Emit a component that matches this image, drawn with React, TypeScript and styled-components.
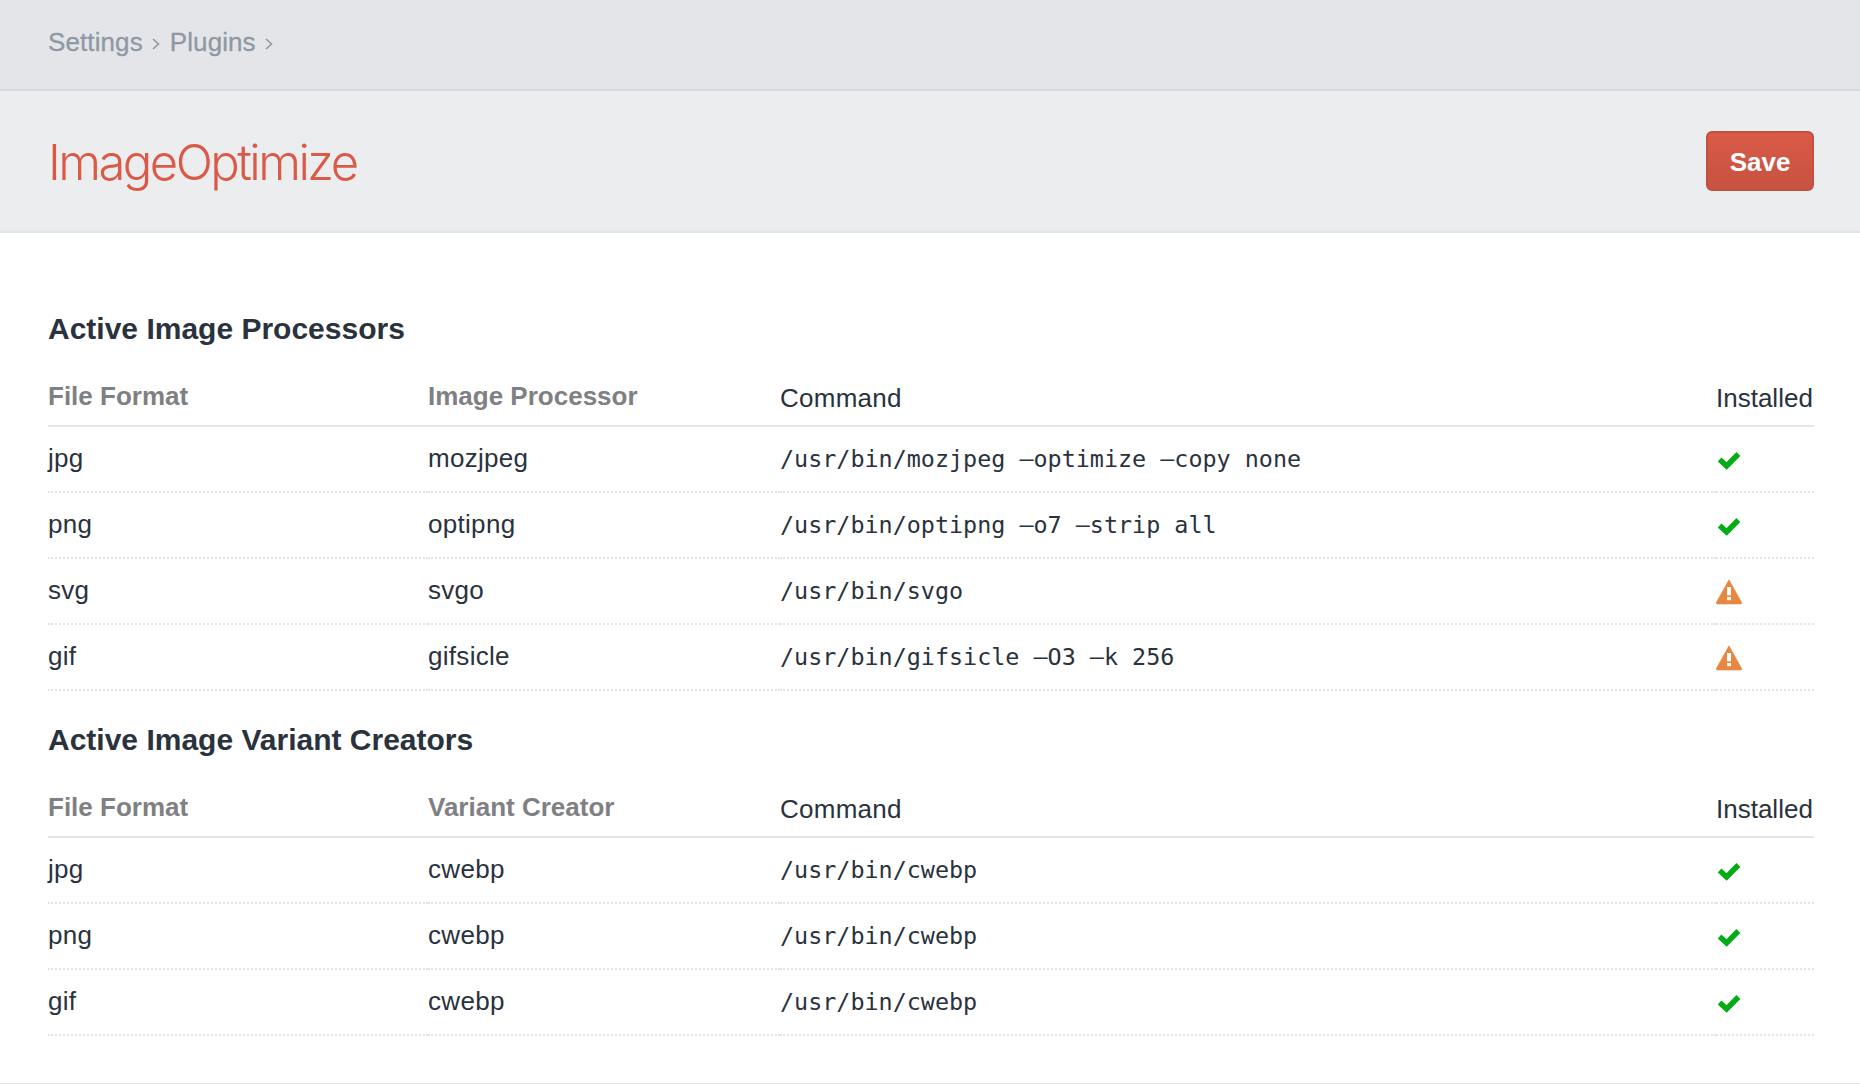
import styled, { createGlobalStyle } from "styled-components";

const GlobalStyle = createGlobalStyle`
  html, body {
    margin: 0;
    padding: 0;
    background: #fff;
  }
  body {
    font-family: "Liberation Sans", Arial, sans-serif;
    font-size: 26px;
    color: #29323d;
    overflow: hidden;
  }
`;

const Page = styled.div`
  height: 1084px;
  box-sizing: border-box;
  border-bottom: 1px solid #e3e5e8;
`;

const CrumbBar = styled.nav`
  height: 91px;
  box-sizing: border-box;
  padding: 0 48px 5px;
  display: flex;
  align-items: center;
  background: #e3e5e8;
  border-bottom: 2px solid #d9dbde;
  color: #8f98a3;
  letter-spacing: 0.1px;
  -webkit-text-stroke: 0.3px #8f98a3;
`;

const Crumb = styled.span`
  display: flex;
  align-items: center;
`;

const Chevron = styled.svg`
  width: 8px;
  height: 14px;
  margin: 4px 10px 0 9px;
  fill: none;
  stroke: #8f98a3;
  stroke-width: 1.6;
`;

const Header = styled.header`
  height: 142px;
  box-sizing: border-box;
  padding: 0 46px 0 48px;
  display: flex;
  align-items: center;
  justify-content: space-between;
  background: #ebedef;
  border-bottom: 2px solid #e3e5e8;
`;

const Title = styled.h1`
  margin: 2px 0 0;
  font-family: Inter, "Liberation Sans", sans-serif;
  font-size: 49px;
  font-weight: 300;
  letter-spacing: -2.55px;
  color: #da5a47;
`;

const SaveButton = styled.button`
  width: 108px;
  height: 60px;
  padding: 2px 0 0;
  font-family: inherit;
  font-size: 26px;
  font-weight: 700;
  color: #fff;
  background: linear-gradient(#da5a47, #c75241);
  border: 2px solid #c1503f;
  border-radius: 6px;
`;

const Content = styled.main`
  padding: 76px 46px 0 48px;
`;

const Heading = styled.h2`
  margin: 0;
  height: 40px;
  line-height: 40px;
  font-size: 30px;
  font-weight: 700;
`;

const Table = styled.table`
  width: 100%;
  table-layout: fixed;
  border-collapse: separate;
  border-spacing: 0;
  margin-bottom: 29px;
`;

const HeadCell = styled.th<{ $muted?: boolean; $spaced?: boolean }>`
  height: 78px;
  box-sizing: border-box;
  padding: 0 0 ${(p) => (p.$muted ? "14px" : "12px")};
  vertical-align: bottom;
  text-align: left;
  line-height: 30px;
  font-size: 26px;
  font-weight: ${(p) => (p.$muted ? 700 : 400)};
  letter-spacing: ${(p) => (p.$spaced ? "0.25px" : "0")};
  color: ${(p) => (p.$muted ? "#7f8083" : "#29323d")};
  border-bottom: 2px solid #e3e5e8;
`;

const Cell = styled.td`
  height: 66px;
  box-sizing: border-box;
  padding: 0 0 2px;
  line-height: 30px;
  letter-spacing: 0.3px;
  border-bottom: 2px dotted #e3e5e8;
`;

const CommandCell = styled(Cell)`
  padding: 0;
  font-family: "DejaVu Sans Mono", "Liberation Mono", monospace;
  font-size: 23.4px;
  letter-spacing: 0;
`;

const IconCell = styled(Cell)`
  padding: 2px 0 0;
`;

const IconSvg = styled.svg`
  display: block;
`;

const CheckIcon = () => (
  <IconSvg width="26" height="26" viewBox="0 0 26 26">
    <path d="M3.6 12.6 L10.6 19 L22.4 7" fill="none" stroke="#02ac13" strokeWidth="5.4" />
  </IconSvg>
);

const WarnIcon = () => (
  <IconSvg width="26" height="26" viewBox="0 0 26 26">
    <path
      d="M13 .8 L25.6 23.4 Q26 25 24.6 25 L1.4 25 Q0 25 .4 23.4 Z"
      fill="#e8873f"
      stroke="#e8873f"
      strokeWidth=".6"
    />
    <rect x="11" y="8" width="4" height="8.4" fill="#fff" />
    <rect x="11" y="18" width="4" height="3.2" fill="#fff" />
  </IconSvg>
);

type Row = { format: string; tool: string; command: string; ok: boolean };

const processors: Row[] = [
  { format: "jpg", tool: "mozjpeg", command: "/usr/bin/mozjpeg –optimize –copy none", ok: true },
  { format: "png", tool: "optipng", command: "/usr/bin/optipng –o7 –strip all", ok: true },
  { format: "svg", tool: "svgo", command: "/usr/bin/svgo", ok: false },
  { format: "gif", tool: "gifsicle", command: "/usr/bin/gifsicle –O3 –k 256", ok: false },
];

const variants: Row[] = [
  { format: "jpg", tool: "cwebp", command: "/usr/bin/cwebp", ok: true },
  { format: "png", tool: "cwebp", command: "/usr/bin/cwebp", ok: true },
  { format: "gif", tool: "cwebp", command: "/usr/bin/cwebp", ok: true },
];

const ToolTable = ({ toolLabel, rows }: { toolLabel: string; rows: Row[] }) => (
  <Table>
    <colgroup>
      <col width="380" />
      <col width="352" />
      <col width="936" />
      <col />
    </colgroup>
    <thead>
      <tr>
        <HeadCell $muted>File Format</HeadCell>
        <HeadCell $muted>{toolLabel}</HeadCell>
        <HeadCell $spaced>Command</HeadCell>
        <HeadCell>Installed</HeadCell>
      </tr>
    </thead>
    <tbody>
      {rows.map((row) => (
        <tr key={row.format}>
          <Cell>{row.format}</Cell>
          <Cell>{row.tool}</Cell>
          <CommandCell>{row.command}</CommandCell>
          <IconCell>{row.ok ? <CheckIcon /> : <WarnIcon />}</IconCell>
        </tr>
      ))}
    </tbody>
  </Table>
);

export default function App() {
  return (
    <Page>
      <GlobalStyle />
      <CrumbBar>
        <Crumb>
          Settings
          <Chevron viewBox="0 0 8 14">
            <path d="M1 2 L6.5 7 L1 12" />
          </Chevron>
        </Crumb>
        <Crumb>
          Plugins
          <Chevron viewBox="0 0 8 14">
            <path d="M1 2 L6.5 7 L1 12" />
          </Chevron>
        </Crumb>
      </CrumbBar>
      <Header>
        <Title>ImageOptimize</Title>
        <SaveButton>Save</SaveButton>
      </Header>
      <Content>
        <Heading>Active Image Processors</Heading>
        <ToolTable toolLabel="Image Processor" rows={processors} />
        <Heading>Active Image Variant Creators</Heading>
        <ToolTable toolLabel="Variant Creator" rows={variants} />
      </Content>
    </Page>
  );
}
